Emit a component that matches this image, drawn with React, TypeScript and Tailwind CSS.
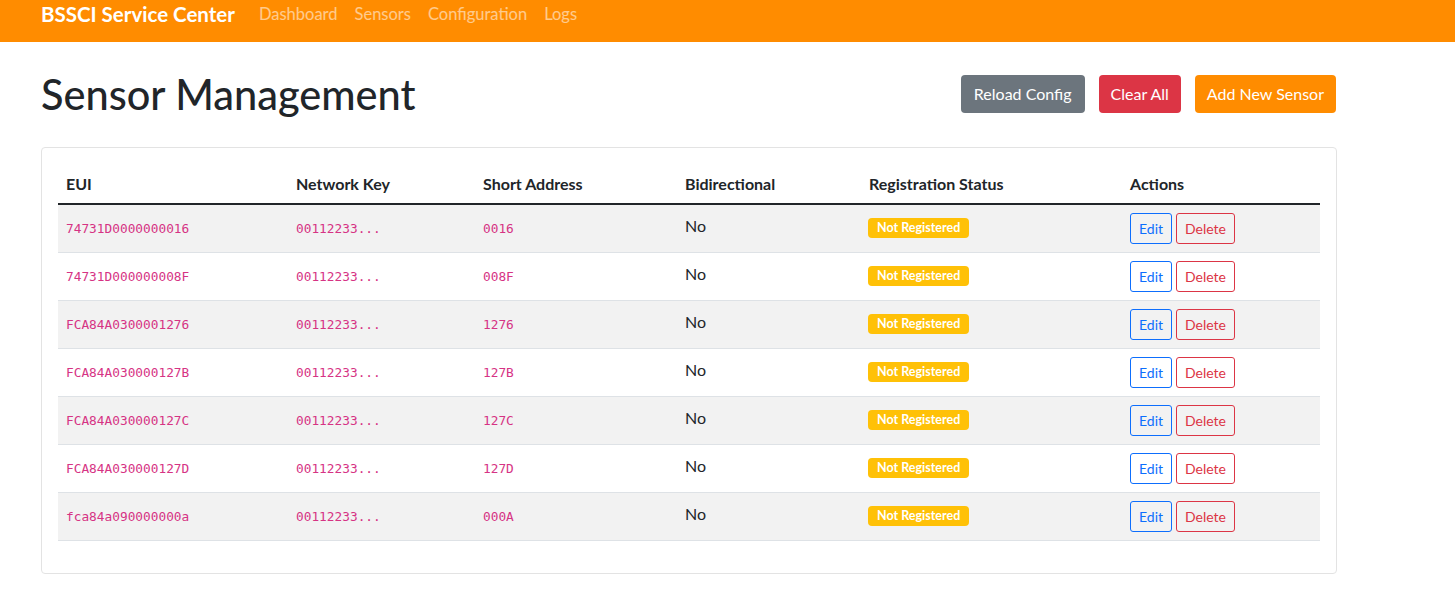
const sensors = [
  { eui: '74731D0000000016', key: '00112233...', short: '0016' },
  { eui: '74731D000000008F', key: '00112233...', short: '008F' },
  { eui: 'FCA84A0300001276', key: '00112233...', short: '1276' },
  { eui: 'FCA84A030000127B', key: '00112233...', short: '127B' },
  { eui: 'FCA84A030000127C', key: '00112233...', short: '127C' },
  { eui: 'FCA84A030000127D', key: '00112233...', short: '127D' },
  { eui: 'fca84a090000000a', key: '00112233...', short: '000A' },
];

const font = 'font-["Segoe_UI","Lato","Noto_Sans",sans-serif]';
const mono = 'font-["DejaVu_Sans_Mono",monospace] text-[12.8px] text-[#d63384]';

export default function App() {
  return (
    <div className={`min-h-screen bg-white text-[#212529] ${font}`}>
      {/* navbar */}
      <nav className="h-[42px] bg-[#ff8c00] pl-[41px] flex items-start">
        <span className="text-[20.5px] font-bold text-white leading-[28px] mr-[24px]">BSSCI Service Center</span>
        <div className="flex gap-[17px] text-[16.5px] leading-[28px] text-white/55">
          <a>Dashboard</a>
          <a>Sensors</a>
          <a>Configuration</a>
          <a>Logs</a>
        </div>
      </nav>

      <main className="pl-[41px] w-[1337px]">
        <div className="flex items-center justify-between mt-[33px] mb-[34px] h-[38px]">
          <h1 className="text-[41.5px] font-medium leading-[48px]">Sensor Management</h1>
          <div className="flex gap-[14px] mr-[1px]">
            <button className="h-[38px] px-[13px] rounded-[4px] bg-[#6c757d] text-white text-[16px]">Reload Config</button>
            <button className="h-[38px] px-[12px] rounded-[4px] bg-[#dc3545] text-white text-[16px]">Clear All</button>
            <button className="h-[38px] px-[12px] rounded-[4px] bg-[#ff8c00] text-white text-[16px]">Add New Sensor</button>
          </div>
        </div>

        <div className="border border-[#e3e3e3] rounded-[4px] p-[16px] pb-[32px]">
          <table className="w-full border-collapse text-left text-[16px]">
            <thead>
              <tr className="border-b-2 border-[#212529]">
                <th className="w-[230px] px-[8px] h-[40px] font-bold">EUI</th>
                <th className="w-[187px] px-[8px] font-bold">Network Key</th>
                <th className="w-[202px] px-[8px] font-bold">Short Address</th>
                <th className="w-[184px] px-[8px] font-bold">Bidirectional</th>
                <th className="w-[261px] px-[8px] font-bold">Registration Status</th>
                <th className="px-[8px] font-bold">Actions</th>
              </tr>
            </thead>
            <tbody>
              {sensors.map((s, i) => (
                <tr key={s.eui} className={`h-[48px] border-b border-[#dee2e6] ${i % 2 === 0 ? 'bg-[#f2f2f2]' : 'bg-white'}`}>
                  <td className="px-[8px] pb-[3px]"><code className={mono}>{s.eui}</code></td>
                  <td className="px-[8px] pb-[3px]"><code className={mono}>{s.key}</code></td>
                  <td className="px-[8px] pb-[3px]"><code className={mono}>{s.short}</code></td>
                  <td className="px-[8px] pb-[4px]">No</td>
                  <td className="px-[7px] pb-[4px]">
                    <span className="inline-block rounded-[4px] bg-[#ffc107] text-white text-[12.5px] font-bold px-[9px] leading-[20px]">Not Registered</span>
                  </td>
                  <td className="px-[8px]">
                    <div className="flex gap-[4px]">
                      <button className="h-[31px] px-[8px] rounded-[3px] border border-[#0d6efd] text-[#0d6efd] text-[14px]">Edit</button>
                      <button className="h-[31px] px-[8px] rounded-[3px] border border-[#dc3545] text-[#dc3545] text-[14px]">Delete</button>
                    </div>
                  </td>
                </tr>
              ))}
            </tbody>
          </table>
        </div>
      </main>
    </div>
  );
}
